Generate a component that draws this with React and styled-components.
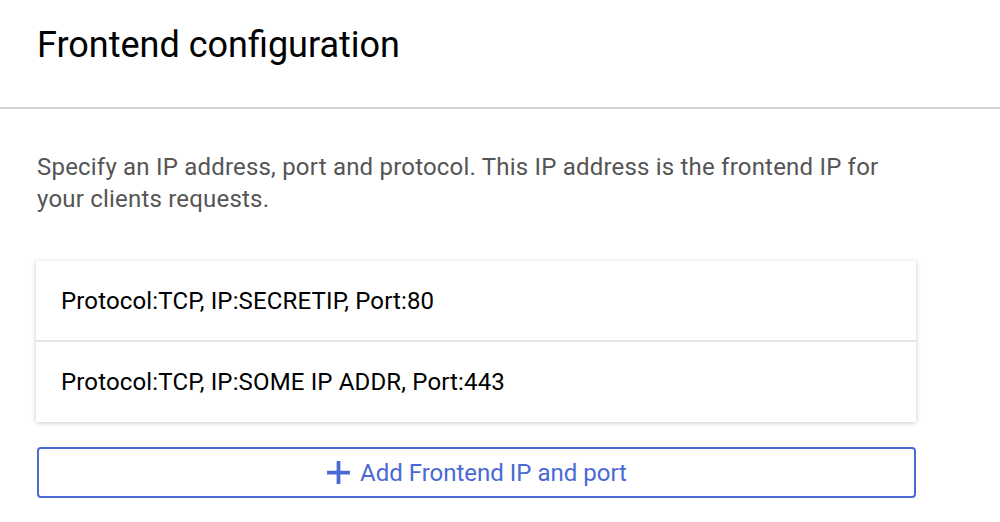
import React from 'react';
import styled, { createGlobalStyle } from 'styled-components';

const GlobalStyle = createGlobalStyle`
    body {
        margin: 0;
        background: #ffffff;
        font-family: Roboto, "Liberation Sans", sans-serif;
    }
`;

const frontends = [
    { protocol: 'TCP', ip: 'SECRETIP', port: 80 },
    { protocol: 'TCP', ip: 'SOME IP ADDR', port: 443 },
];

function PlusIcon() {
    return (
        <svg width="25" height="25" viewBox="0 0 24 24">
            <path d="M12 1v22M1 12h22" stroke="currentColor" strokeWidth="3.6" fill="none" />
        </svg>
    );
}

export default function App() {
    return (
        <Page>
            <GlobalStyle />
            <Header>
                <Title>Frontend configuration</Title>
            </Header>
            <Content>
                <Description>
                    Specify an IP address, port and protocol. This IP address is the frontend IP for
                    your clients requests.
                </Description>
                <Card>
                    {frontends.map((f) => (
                        <Row key={f.port}>
                            Protocol:{f.protocol}, IP:{f.ip}, Port:{f.port}
                        </Row>
                    ))}
                </Card>
                <AddButton>
                    <PlusIcon />
                    Add Frontend IP and port
                </AddButton>
            </Content>
        </Page>
    );
}

const Page = styled.div`
    width: 1000px;
    height: 522px;
    overflow: hidden;
`;

const Header = styled.div`
    height: 109px;
    padding-left: 37px;
    border-bottom: 2px solid #d6d6d6;
    box-sizing: border-box;
    display: flex;
    align-items: flex-start;
`;

const Title = styled.h1`
    margin: 23px 0 0;
    font-size: 36px;
    font-weight: 400;
    line-height: 44px;
    color: #000000;
`;

const Content = styled.div`
    padding: 42px 0 0 36px;
    width: 880px;
`;

const Description = styled.p`
    margin: 0 0 46px 1px;
    max-width: 860px;
    font-size: 24px;
    line-height: 32px;
    letter-spacing: 0.2px;
    color: #555555;
`;

const Card = styled.div`
    background: #ffffff;
    box-shadow: 0 1px 5px rgba(0, 0, 0, 0.22);
`;

const Row = styled.div`
    height: 79px;
    display: flex;
    align-items: center;
    padding-left: 25px;
    font-size: 24px;
    letter-spacing: 0.15px;
    color: #000000;
    & + & {
        height: 80px;
        border-top: 2px solid #e5e5e5;
    }
`;

const AddButton = styled.button`
    margin-top: 25px;
    width: 879px;
    height: 51px;
    margin-left: 1px;
    box-sizing: border-box;
    display: flex;
    align-items: center;
    justify-content: center;
    gap: 9px;
    background: #ffffff;
    border: 2px solid #4a69d4;
    border-radius: 4px;
    color: #4a69d4;
    font-family: Roboto, "Liberation Sans", sans-serif;
    font-size: 24px;
    cursor: pointer;
`;
